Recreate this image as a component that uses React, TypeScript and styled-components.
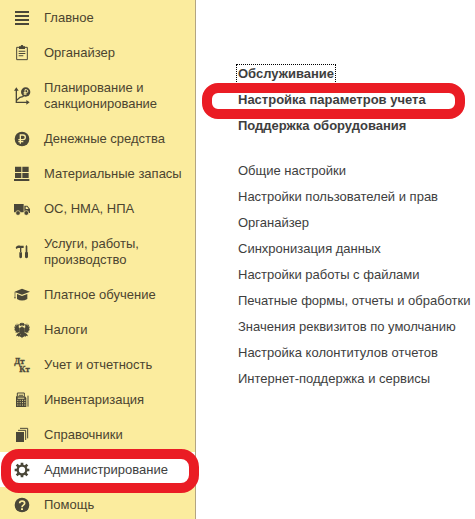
import React from "react";
import styled, { createGlobalStyle, css } from "styled-components";

const GlobalStyle = createGlobalStyle`
  * { box-sizing: border-box; }
  body {
    margin: 0;
    background: #fff;
    color: #3e3e3e;
    font-family: "Liberation Sans", Arial, sans-serif;
    font-size: 13px;
    line-height: 16px;
  }
`;

const Layout = styled.div`
  display: flex;
  height: 100vh;
  overflow: hidden;
`;

const Sidebar = styled.nav`
  flex: 0 0 196px;
  background: #fbec9e;
  border-right: 1px solid #b3a582;
`;

const SectionList = styled.ul`
  list-style: none;
  margin: 0;
  padding: 0;
`;

const SectionButton = styled.button<{ $active?: boolean }>`
  position: relative;
  display: flex;
  align-items: center;
  gap: 14px;
  width: 100%;
  padding: 10px 8px 9px 14px;
  border: 0;
  background: ${(p) => (p.$active ? "#fff" : "transparent")};
  color: ${(p) => (p.$active ? "#404040" : "#4b4430")};
  font: inherit;
  text-align: left;
  cursor: pointer;
`;

const SectionLabel = styled.span`
  flex: 1;
  white-space: pre;
`;

const Icon = styled.svg`
  flex: none;
  width: 16px;
  height: 16px;
  overflow: visible;
  color: #4a4738;
`;

const marker = css`
  content: "";
  position: absolute;
  border: 10px solid #ea1c24;
  pointer-events: none;
  z-index: 1;
`;

const MarkedSection = styled(SectionButton)`
  &::after {
    ${marker}
    inset: -3px -4px -6px 1px;
    border-radius: 18px;
  }
`;

const Content = styled.main`
  flex: 1;
  min-width: 0;
  padding: 61px 0 0 42px;
`;

const LinkList = styled.ul<{ $strong?: boolean }>`
  list-style: none;
  margin: 0 0 19px;
  padding: 0;
  font-weight: ${(p) => (p.$strong ? "bold" : "normal")};
`;

const LinkItem = styled.li`
  display: flex;
  height: 26px;
  align-items: center;
`;

const CommandLink = styled.a<{ $focused?: boolean }>`
  position: relative;
  color: inherit;
  text-decoration: none;
  white-space: nowrap;
  outline: ${(p) => (p.$focused ? "1px dotted #000" : "none")};
  outline-offset: 1px;
`;

const MarkedLink = styled(CommandLink)`
  &::after {
    ${marker}
    inset: -9px -39px -11px -36px;
    border-radius: 16px;
  }
`;

const icons = {
  main: <path d="M3 3h42v6H3zM3 15h42v6H3zM3 27h42v6H3zM3 39h42v6H3z" />,
  organizer: (
    <>
      <path d="M8 7h32v37H8z" fill="none" stroke="currentColor" strokeWidth="3" />
      <path d="M15 4h5c0-5 8-5 8 0h5v8H15zM14 17h20v3H14zM14 24h20v3H14zM14 31h14v3H14z" />
    </>
  ),
  planning: (
    <>
      <path d="M7 5v38h34M8 37l10-9 8-2 6-6" fill="none" stroke="currentColor" strokeWidth="4" />
      <path d="M7-2l7 10H0zM47 43l-10 7V36z" />
      <circle cx="35" cy="12" r="14" />
      <path d="M33 21V5h4a4 4 0 0 1 0 9h-8M29 18h9" fill="none" stroke="#fbec9e" strokeWidth="3" />
    </>
  ),
  money: (
    <>
      <circle cx="24" cy="24" r="22" />
      <path d="M19 38V12h8a7 7 0 0 1 0 14H13M13 32h15" fill="none" stroke="#fbec9e" strokeWidth="4" />
    </>
  ),
  stock: <path d="M3 2h19v16H3zM25 2h19v16H25zM3 21h19v15H3zM25 21h19v15H25zM0 39h46v6H0z" />,
  assets: (
    <>
      <path d="M0 9h29v25H0zM31 14h9l8 10v12H31z" />
      <path d="M35 17h4l5 7h-9z" fill="#fbec9e" />
      <g stroke="#fbec9e" strokeWidth="2">
        <circle cx="12" cy="36" r="7" />
        <circle cx="37" cy="36" r="7" />
      </g>
    </>
  ),
  services: (
    <>
      <path d="M5 11c3-6 8-7 14-6h10v7h-7v12h-4V12h-6l-5 3zM16 25h8v15q-4 6-8 0z" />
      <path d="M35 7l2-4 3 4v18h-5zM33 25h9v15q-5 6-9 0z" />
    </>
  ),
  education: (
    <path d="M24 5l24 9-24 9L4 16v14l2 4H0l2-5V14zM9 21l15 6 16-6v15q-16 9-31 0z" />
  ),
  taxes: (
    <>
      <path d="M23 15V9l-3 3-5-3 4-6 4 1 1-4 1 4 4-1 4 6-5 3-3-3v6l6 2 1 14-8 10-8-10 1-14z" />
      <path d="M17 19l-3-3 1-11-4 5-2-7-2 8-4-4 1 9-4-3 3 9-3 1 6 5-3 3 7 1 7-2zM31 19l3-3-1-11 4 5 2-7 2 8 4-4-1 9 4-3-3 9 3 1-6 5 3 3-7 1-7-2z" />
      <path d="M18 31l-9 5-3 7 6-2 2 4 9-9zM30 31l9 5 3 7-6-2-2 4-9-9zM20 37h8l3 8-4-1-3 5-3-5-4 1z" />
    </>
  ),
  accounting: (
    <g
      fontFamily="Liberation Serif, serif"
      fontWeight="bold"
      fontSize="26"
      stroke="currentColor"
      strokeWidth="1"
    >
      <text x="1" y="20">Дт</text>
      <text x="16" y="46">Кт</text>
    </g>
  ),
  inventory: (
    <>
      <path d="M10 13V3h21v10M42 11v33" fill="none" stroke="currentColor" strokeWidth="3" />
      <path d="M14 8h13v3H14zM6 13h27l4 5v27H6z" />
      <path d="M10 25h24M10 32h24M10 39h24" stroke="#fbec9e" strokeWidth="3" strokeDasharray="3 4" />
      <path d="M11 17h20v3H11z" fill="#fbec9e" />
    </>
  ),
  catalogs: (
    <>
      <path d="M6 15h24v30H6z" />
      <path d="M12 10h23v29M18 4h23v30" fill="none" stroke="currentColor" strokeWidth="3" />
    </>
  ),
  admin: (
    <>
      <circle cx="24" cy="24" r="13" fill="none" stroke="currentColor" strokeWidth="7" />
      <path
        d="M24 2v8M24 38v8M2 24h8M38 24h8M8 8l6 6M34 34l6 6M40 8l-6 6M14 34l-6 6"
        stroke="currentColor"
        strokeWidth="8"
      />
    </>
  ),
  help: (
    <>
      <circle cx="24" cy="24" r="22" />
      <path d="M17 19c0-9 15-9 15 0 0 6-8 5-8 12" fill="none" stroke="#fbec9e" strokeWidth="5" />
      <path d="M21 34h6v5h-6z" fill="#fbec9e" />
    </>
  ),
};

type Section = { icon: keyof typeof icons; label: string; active?: boolean };

const sections: Section[] = [
  { icon: "main", label: "Главное" },
  { icon: "organizer", label: "Органайзер" },
  { icon: "planning", label: "Планирование и\nсанкционирование" },
  { icon: "money", label: "Денежные средства" },
  { icon: "stock", label: "Материальные запасы" },
  { icon: "assets", label: "ОС, НМА, НПА" },
  { icon: "services", label: "Услуги, работы,\nпроизводство" },
  { icon: "education", label: "Платное обучение" },
  { icon: "taxes", label: "Налоги" },
  { icon: "accounting", label: "Учет и отчетность" },
  { icon: "inventory", label: "Инвентаризация" },
  { icon: "catalogs", label: "Справочники" },
  { icon: "admin", label: "Администрирование", active: true },
  { icon: "help", label: "Помощь" },
];

const settings = [
  "Общие настройки",
  "Настройки пользователей и прав",
  "Органайзер",
  "Синхронизация данных",
  "Настройки работы с файлами",
  "Печатные формы, отчеты и обработки",
  "Значения реквизитов по умолчанию",
  "Настройка колонтитулов отчетов",
  "Интернет-поддержка и сервисы",
];

export default function App() {
  return (
    <>
      <GlobalStyle />
      <Layout>
        <Sidebar aria-label="Разделы">
          <SectionList>
            {sections.map(({ icon, label, active }) => {
              const Button = active ? MarkedSection : SectionButton;
              return (
                <li key={label}>
                  <Button type="button" $active={active} aria-current={active ? "page" : undefined}>
                    <Icon viewBox="0 0 48 48" fill="currentColor" aria-hidden="true">
                      {icons[icon]}
                    </Icon>
                    <SectionLabel>{label}</SectionLabel>
                  </Button>
                </li>
              );
            })}
          </SectionList>
        </Sidebar>
        <Content>
          <LinkList $strong>
            <LinkItem>
              <CommandLink href="#service" $focused>Обслуживание</CommandLink>
            </LinkItem>
            <LinkItem>
              <MarkedLink href="#accounting">Настройка параметров учета</MarkedLink>
            </LinkItem>
            <LinkItem>
              <CommandLink href="#equipment">Поддержка оборудования</CommandLink>
            </LinkItem>
          </LinkList>
          <LinkList>
            {settings.map((label) => (
              <LinkItem key={label}>
                <CommandLink href="#settings">{label}</CommandLink>
              </LinkItem>
            ))}
          </LinkList>
        </Content>
      </Layout>
    </>
  );
}
